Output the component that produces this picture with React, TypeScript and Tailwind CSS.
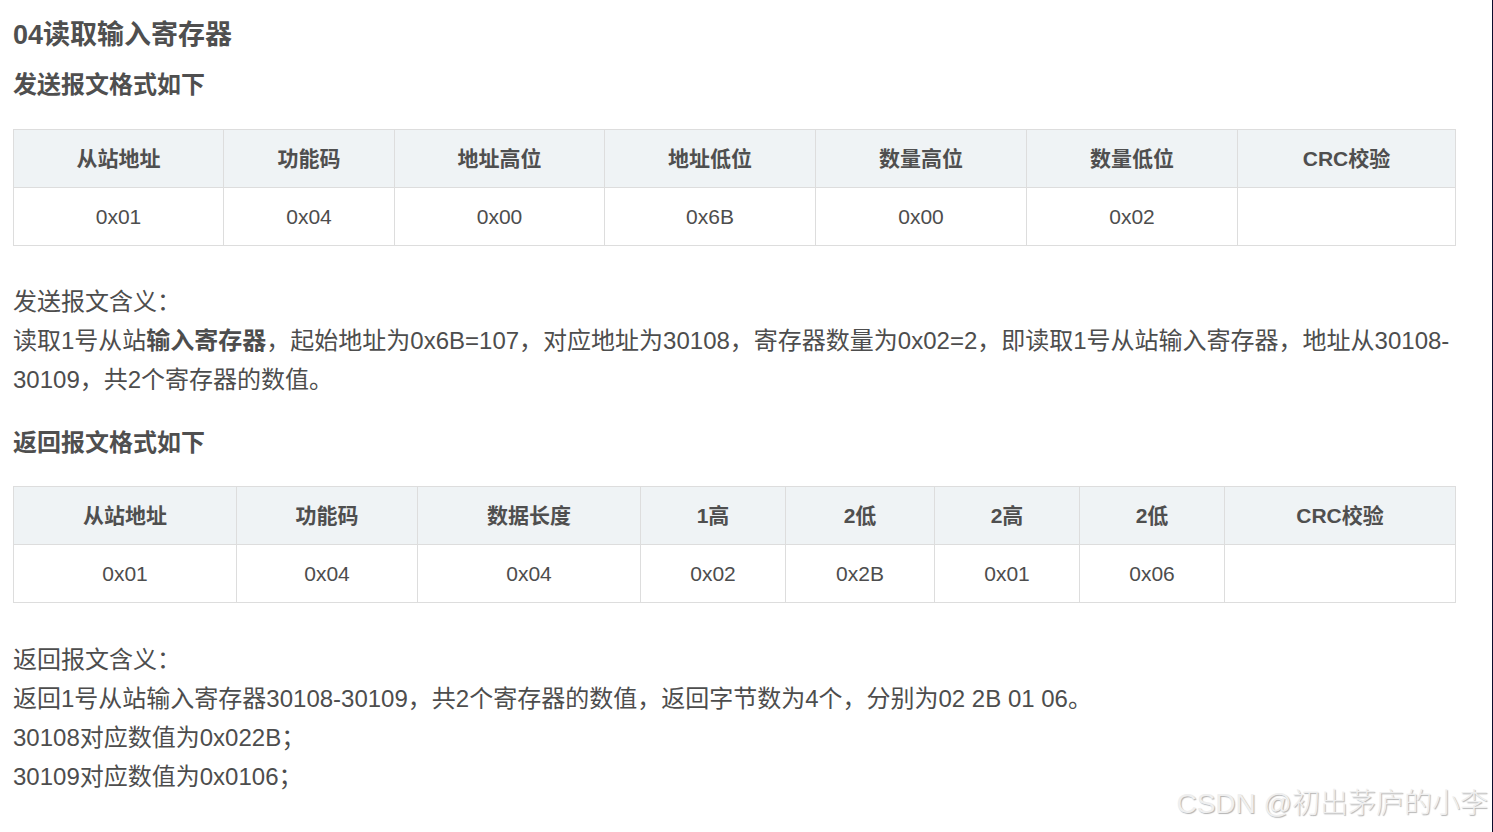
const sendHead = ['从站地址', '功能码', '地址高位', '地址低位', '数量高位', '数量低位', 'CRC校验']
const sendBody = ['0x01', '0x04', '0x00', '0x6B', '0x00', '0x02', '']
const sendCols = [210, 171, 210, 211, 211, 211, 218]

const backHead = ['从站地址', '功能码', '数据长度', '1高', '2低', '2高', '2低', 'CRC校验']
const backBody = ['0x01', '0x04', '0x04', '0x02', '0x2B', '0x01', '0x06', '']
const backCols = [223, 181, 223, 145, 149, 145, 145, 231]

function FrameTable({ head, body, cols }: { head: string[]; body: string[]; cols: number[] }) {
  return (
    <table className="w-[1442px] table-fixed border-collapse text-[21px] text-[#4d4d4d]">
      <colgroup>
        {cols.map((w, i) => (
          <col key={i} style={{ width: w }} />
        ))}
      </colgroup>
      <thead>
        <tr className="bg-[#eff3f5]">
          {head.map((h, i) => (
            <th key={i} className="h-[58px] border border-[#dddddd] p-0 text-center font-bold text-[#4f4f4f]">
              {h}
            </th>
          ))}
        </tr>
      </thead>
      <tbody>
        <tr>
          {body.map((c, i) => (
            <td key={i} className="h-[58px] border border-[#dddddd] p-0 text-center">
              {c}
            </td>
          ))}
        </tr>
      </tbody>
    </table>
  )
}

export default function App() {
  return (
    <div
      className="relative flex h-[832px] w-[1493px] overflow-hidden bg-white text-[#4d4d4d]"
      style={{ fontFamily: '"Liberation Sans", "Noto Sans CJK SC", sans-serif' }}
    >
      <div className="flex-1 border-r border-[#0c0c2c] pl-[13px] pr-[22px] pt-[15px]">
        <h3 className="text-[27px] font-bold leading-[40px] text-[#4f4f4f]">04读取输入寄存器</h3>
        <h4 className="mt-[12px] text-[24px] font-bold leading-[36px] text-[#4f4f4f]">发送报文格式如下</h4>
        <div className="mt-[26px]">
          <FrameTable head={sendHead} body={sendBody} cols={sendCols} />
        </div>
        <p className="mt-[36px] text-[24px] leading-[39px]">
          发送报文含义：
          <br />
          读取1号从站<strong className="font-bold">输入寄存器</strong>，起始地址为0x6B=107，对应地址为30108，寄存器数量为0x02=2，即读取1号从站输入寄存器，地址从30108-30109，共2个寄存器的数值。
        </p>
        <h4 className="mt-[26px] text-[24px] font-bold leading-[36px] text-[#4f4f4f]">返回报文格式如下</h4>
        <div className="mt-[25px]">
          <FrameTable head={backHead} body={backBody} cols={backCols} />
        </div>
        <p className="mt-[37px] text-[24px] leading-[39px]">
          返回报文含义：
          <br />
          返回1号从站输入寄存器30108-30109，共2个寄存器的数值，返回字节数为4个，分别为02 2B 01 06。
          <br />
          30108对应数值为0x022B；
          <br />
          30109对应数值为0x0106；
        </p>
      </div>
      <div className="absolute bottom-[9px] right-[5px] text-[28px] font-light leading-[38px] text-[#efefef] [text-shadow:1px_1px_1px_rgba(0,0,0,0.3)]">
        CSDN @初出茅庐的小李
      </div>
    </div>
  )
}
